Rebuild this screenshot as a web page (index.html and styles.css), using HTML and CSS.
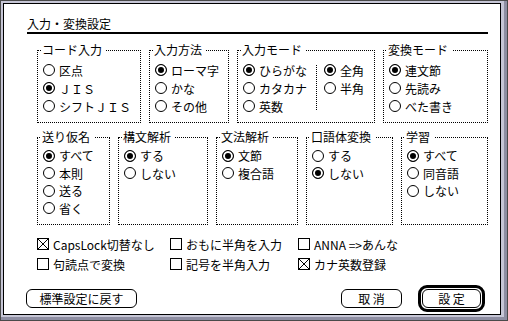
FILE: index.html
```html
<!DOCTYPE html>
<html lang="ja">
<head>
    <meta charset="UTF-8">
    <title>入力・変換設定</title>
    <link rel="stylesheet" href="styles.css">
</head>
<body>
    <div class="frame">
        <div class="dialog">
            <h1 class="title">入力・変換設定</h1>

            <div class="group-row row-top">
                <fieldset class="group g-code">
                    <legend>コード入力</legend>
                    <div class="opt"><span class="radio"></span>区点</div>
                    <div class="opt"><span class="radio on"></span>ＪＩＳ</div>
                    <div class="opt"><span class="radio"></span>シフトＪＩＳ</div>
                </fieldset>
                <fieldset class="group g-method">
                    <legend>入力方法</legend>
                    <div class="opt"><span class="radio on"></span>ローマ字</div>
                    <div class="opt"><span class="radio"></span>かな</div>
                    <div class="opt"><span class="radio"></span>その他</div>
                </fieldset>
                <fieldset class="group g-mode">
                    <legend>入力モード</legend>
                    <div class="mode-cols">
                        <div class="mode-left">
                            <div class="opt"><span class="radio on"></span>ひらがな</div>
                            <div class="opt"><span class="radio"></span>カタカナ</div>
                            <div class="opt"><span class="radio"></span>英数</div>
                        </div>
                        <div class="mode-divider"></div>
                        <div>
                            <div class="opt"><span class="radio on"></span>全角</div>
                            <div class="opt"><span class="radio"></span>半角</div>
                        </div>
                    </div>
                </fieldset>
                <fieldset class="group g-fill">
                    <legend>変換モード</legend>
                    <div class="opt"><span class="radio on"></span>連文節</div>
                    <div class="opt"><span class="radio"></span>先読み</div>
                    <div class="opt"><span class="radio"></span>べた書き</div>
                </fieldset>
            </div>

            <div class="group-row row-bottom">
                <fieldset class="group g-okuri">
                    <legend>送り仮名</legend>
                    <div class="opt"><span class="radio on"></span>すべて</div>
                    <div class="opt"><span class="radio"></span>本則</div>
                    <div class="opt"><span class="radio"></span>送る</div>
                    <div class="opt"><span class="radio"></span>省く</div>
                </fieldset>
                <fieldset class="group g-syntax">
                    <legend>構文解析</legend>
                    <div class="opt"><span class="radio on"></span>する</div>
                    <div class="opt"><span class="radio"></span>しない</div>
                </fieldset>
                <fieldset class="group g-grammar">
                    <legend>文法解析</legend>
                    <div class="opt"><span class="radio on"></span>文節</div>
                    <div class="opt"><span class="radio"></span>複合語</div>
                </fieldset>
                <fieldset class="group g-colloq">
                    <legend>口語体変換</legend>
                    <div class="opt"><span class="radio"></span>する</div>
                    <div class="opt"><span class="radio on"></span>しない</div>
                </fieldset>
                <fieldset class="group g-fill">
                    <legend>学習</legend>
                    <div class="opt"><span class="radio on"></span>すべて</div>
                    <div class="opt"><span class="radio"></span>同音語</div>
                    <div class="opt"><span class="radio"></span>しない</div>
                </fieldset>
            </div>

            <div class="checks">
                <div class="check">
                    <svg class="box" viewBox="0 0 12 12"><rect x="0.5" y="0.5" width="11" height="11"/><path d="M1 1L11 11M11 1L1 11"/></svg>
                    CapsLock切替なし
                </div>
                <div class="check">
                    <svg class="box" viewBox="0 0 12 12"><rect x="0.5" y="0.5" width="11" height="11"/></svg>
                    おもに半角を入力
                </div>
                <div class="check">
                    <svg class="box" viewBox="0 0 12 12"><rect x="0.5" y="0.5" width="11" height="11"/></svg>
                    ANNA =&gt;あんな
                </div>
                <div class="check">
                    <svg class="box" viewBox="0 0 12 12"><rect x="0.5" y="0.5" width="11" height="11"/></svg>
                    句読点で変換
                </div>
                <div class="check">
                    <svg class="box" viewBox="0 0 12 12"><rect x="0.5" y="0.5" width="11" height="11"/></svg>
                    記号を半角入力
                </div>
                <div class="check">
                    <svg class="box" viewBox="0 0 12 12"><rect x="0.5" y="0.5" width="11" height="11"/><path d="M1 1L11 11M11 1L1 11"/></svg>
                    カナ英数登録
                </div>
            </div>

            <div class="buttons">
                <button class="btn btn-reset">標準設定に戻す</button>
                <button class="btn btn-cancel">取 消</button>
                <div class="default-ring">
                    <button class="btn btn-ok">設 定</button>
                </div>
            </div>
        </div>
    </div>
</body>
</html>
```

FILE: styles.css
```css
* {
    box-sizing: border-box;
}

body {
    margin: 0;
    font-family: "Noto Sans CJK JP", "Noto Sans", sans-serif;
    font-size: 12px;
    color: #000;
    background: #fff;
}

/* window frame */
.frame {
    width: 508px;
    height: 321px;
    border: 1px solid #4a4a4a;
    padding: 2px 6px 5px 2px;
    background: #c6c6d6;
    box-shadow: inset -3px -3px 0 #8e8ea2;
}

.dialog {
    height: 100%;
    border: 1px solid #000;
    background: #fff;
    padding: 12px 12px 0 23px;
}

.title {
    margin: 0;
    font-size: 12px;
    font-weight: normal;
    line-height: 16px;
    border-bottom: 2px solid #000;
}

/* option groups */
.group-row {
    display: flex;
    gap: 8px;
    margin-left: 10px;
}

.row-top {
    margin-top: 9px;
}

.row-bottom {
    margin-top: 7px;
}

.group {
    margin: 0;
    min-width: 0;
    border: 1px dotted #000;
    padding: 4px 5px 7px;
}

.row-bottom .group {
    padding-top: 3px;
}

.group legend {
    padding: 0 4px 0 1px;
    margin-left: -2px;
    line-height: 14px;
}

.g-code { width: 104px; }
.g-method { width: 80px; }
.g-mode { width: 138px; }
.g-okuri { width: 73px; }
.g-syntax { width: 90px; }
.g-grammar { width: 82px; }
.g-colloq { width: 87px; }
.g-fill { flex: 1; }

.opt {
    display: flex;
    align-items: center;
    gap: 4px;
    height: 18px;
    white-space: nowrap;
}

.row-bottom .opt {
    height: 17.5px;
}

.radio {
    flex: none;
    width: 12px;
    height: 12px;
    border: 1px solid #000;
    border-radius: 50%;
}

.radio.on {
    background: #000;
    box-shadow: inset 0 0 0 2px #fff;
}

.mode-cols {
    display: flex;
}

.mode-left {
    width: 73px;
}

.mode-divider {
    border-left: 1px dotted #000;
    margin: 4px 7px 5px 0;
}

/* checkboxes */
.checks {
    display: grid;
    grid-template-columns: 133px 128px 1fr;
    margin: 9px 0 0 10px;
}

.check {
    display: flex;
    align-items: center;
    gap: 4px;
    height: 20px;
    white-space: nowrap;
}

.box {
    flex: none;
    width: 12px;
    height: 12px;
    fill: #fff;
    stroke: #000;
    stroke-width: 1;
    shape-rendering: crispEdges;
}

/* buttons */
.buttons {
    display: flex;
    align-items: center;
    margin-top: 11px;
    padding-right: 3px;
}

.btn {
    height: 19px;
    padding: 0;
    border: 1px solid #000;
    border-radius: 6px;
    background: #fff;
    color: #000;
    font: inherit;
    line-height: 17px;
    text-align: center;
}

.btn-reset {
    width: 111px;
    margin-left: -1px;
}

.btn-cancel {
    width: 61px;
    margin-left: auto;
}

.default-ring {
    display: flex;
    margin-left: 16px;
    padding: 1px;
    border: 3px solid #000;
    border-radius: 9px;
}

.btn-ok {
    width: 59px;
}
```
